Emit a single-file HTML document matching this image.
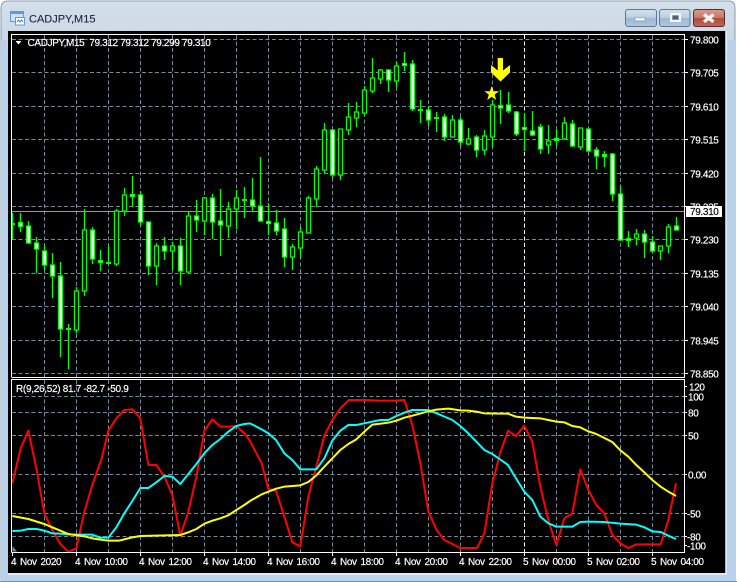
<!DOCTYPE html>
<html><head><meta charset="utf-8"><style>
html,body{margin:0;padding:0;width:737px;height:582px;overflow:hidden;background:#fff}
svg{display:block}
text{font-family:"Liberation Sans",sans-serif}
.t{font-size:10px;letter-spacing:-.35px;fill:#fff;stroke:#fff;stroke-width:.18px}
</style></head><body>
<svg width="737" height="582" viewBox="0 0 737 582" xmlns="http://www.w3.org/2000/svg">
<defs>
<linearGradient id="tb" x1="0" y1="0" x2="0" y2="1"><stop offset="0" stop-color="#d3dfe9"/><stop offset=".06" stop-color="#ccdae7"/><stop offset=".1" stop-color="#b9d1ea"/><stop offset="1" stop-color="#b9d1ea"/></linearGradient>
<linearGradient id="bb" x1="0" y1="0" x2="0" y2="1"><stop offset="0" stop-color="#d2e0ec"/><stop offset=".48" stop-color="#bccfe0"/><stop offset=".52" stop-color="#9fb9d2"/><stop offset="1" stop-color="#aec7dd"/></linearGradient>
<linearGradient id="rb" x1="0" y1="0" x2="0" y2="1"><stop offset="0" stop-color="#d89a8c"/><stop offset=".48" stop-color="#c87a6a"/><stop offset=".52" stop-color="#b04a3a"/><stop offset="1" stop-color="#c06a58"/></linearGradient>
<clipPath id="main"><rect x="12" y="35" width="672" height="342"/></clipPath>
<clipPath id="sub"><rect x="12" y="380" width="672" height="172"/></clipPath>
<clipPath id="lab"><rect x="686" y="200" width="40" height="6"/></clipPath>
</defs>
<rect width="737" height="582" fill="#fff"/>
<path d="M1 580V8Q1 1 8 1H729Q735 1 735 8V580Z" fill="url(#tb)" stroke="#8c9cab" stroke-width="1"/>
<rect x="0" y="581" width="737" height="1" fill="#2fb4c6"/>
<rect x="1" y="575" width="735" height="6" fill="#b9d1ea"/>
<rect x="1" y="40" width="6" height="536" fill="#b9d1ea"/>
<rect x="728" y="40" width="7" height="536" fill="#b9d1ea"/>

<!-- title icon -->
<rect x="10.5" y="11.5" width="13" height="10" fill="#cfe3f6" stroke="#5f9bd6"/>
<rect x="11" y="12" width="12" height="2" fill="#5f9bd6"/>
<rect x="15.5" y="17.5" width="9" height="7.5" fill="#fff" stroke="#5f9bd6"/>
<path d="M17 22l1.500-2 1.500 2 1.500-2 1.500 2" fill="none" stroke="#4a7fb8"/>
<text x="29" y="22.500" font-size="11" fill="#16243a" stroke="#16243a" stroke-width=".12">CADJPY,M15</text>

<!-- window buttons -->
<rect x="625.500" y="9.500" width="31" height="17" rx="2.500" fill="url(#bb)" stroke="#5f7890"/>
<rect x="635" y="17.500" width="10" height="3.500" fill="#f4f6f8" stroke="#6b7f94" stroke-width=".5"/>
<rect x="659.500" y="9.500" width="30.500" height="17" rx="2.500" fill="url(#bb)" stroke="#5f7890"/>
<rect x="671" y="14" width="9" height="7" fill="none" stroke="#f4f6f8" stroke-width="2"/>
<rect x="672.500" y="15.500" width="6" height="4" fill="#4f6375"/>
<rect x="693.500" y="9.500" width="31" height="17" rx="2.500" fill="url(#rb)" stroke="#5a2a24"/>
<path d="M704 14.500L713.500 21.800M713.500 14.500L704 21.800" stroke="#f4f4f4" stroke-width="3.400"/>

<!-- chart background -->
<rect x="8" y="31" width="718" height="542" fill="#000"/>
<path d="M726 31V574H8" fill="none" stroke="#eef2f5" stroke-width="1.500"/>

<!-- grid -->
<g stroke="#778899" stroke-width="1" fill="none" stroke-dasharray="4 2.500">
<path d="M12 39.500H684M12 72.500H684M12 106.500H684M12 139.500H684M12 173.500H684M12 206.500H684M12 239.500H684M12 273.500H684M12 306.500H684M12 340.500H684M12 373.500H684"/>
<path d="M44.500 35V377M76.500 35V377M108.500 35V377M140.500 35V377M172.500 35V377M204.500 35V377M236.500 35V377M268.500 35V377M300.500 35V377M332.500 35V377M364.500 35V377M396.500 35V377M428.500 35V377M460.500 35V377M492.500 35V377M556.500 35V377M588.500 35V377M620.500 35V377M652.500 35V377"/>
<path d="M12 396.500H684M12 412.500H684M12 435.500H684M12 474.500H684M12 513.500H684M12 536.500H684"/>
<path d="M44.500 380V552M76.500 380V552M108.500 380V552M140.500 380V552M172.500 380V552M204.500 380V552M236.500 380V552M268.500 380V552M300.500 380V552M332.500 380V552M364.500 380V552M396.500 380V552M428.500 380V552M460.500 380V552M492.500 380V552M556.500 380V552M588.500 380V552M620.500 380V552M652.500 380V552"/>
</g>
<path d="M524.500 35V377M524.500 380V552" stroke="#fff" stroke-dasharray="4 2.500" fill="none"/>
<path d="M12 211.500H684" stroke="#8f9aa6" stroke-width="1"/>

<!-- candles -->
<g clip-path="url(#main)">
<path fill="none" stroke="#00ff00" stroke-width="1.300" d="M12.500 213V240M20.500 213V232M28.500 221V244M36.500 237V273M44.500 245V270M52.500 253V298M60.500 262V357M68.500 324V369M76.500 287V333M84.500 209V296M92.500 227V264M100.500 250V271M108.500 245V264M116.500 209V266M124.500 188V216M132.500 176V207M140.500 191V225M148.500 222V275M156.500 243V285M164.500 237V260M172.500 242V270M180.500 238V285M188.500 212V273M196.500 200V232M204.500 197V235M212.500 194V239M220.500 189V256M228.500 202V238M236.500 190V229M244.500 187V218M252.500 178V212M260.500 157V222M268.500 203V235M276.500 210V235M284.500 218V267M292.500 244V270M300.500 227V258M308.500 196V233M316.500 166V207M324.500 123V173M332.500 129V178M340.500 129V180M348.500 103V135M356.500 102V127M364.500 86V115M372.500 58V93M380.500 69V84M388.500 69V92M396.500 62V87M404.500 52V71M412.500 60V111M420.500 100V123M428.500 106V126M436.500 112V132M444.500 114V141M452.500 115V137M460.500 117V146M468.500 128V145M476.500 135V157M484.500 130V155M492.500 100V147M500.500 90V124M508.500 92V113M516.500 111V136M524.500 113V151M532.500 111V136M540.500 124V154M548.500 125V154M556.500 129V146M564.500 117V140M572.500 120V147M580.500 128V150M588.500 128V152M596.500 147V169M604.500 151V167M612.500 153V201M620.500 185V241M628.500 231V247M636.500 229V245M644.500 230V258M652.500 236V253M660.500 246V260M668.500 224V253M676.500 217V230"/>
<path fill="none" stroke="#00ff00" stroke-width="2" d="M10 224H15M66 329H71M106 263H111M242 200H247M418 110H423M434 118H439"/>
<path fill="#fff" stroke="#00ff00" stroke-width="1.300" d="M18.500 222.500h4V226.500h-4zM26.500 226h4V243h-4zM34.500 243h4V249h-4zM42.500 251h4V265h-4zM50.500 265h4V276h-4zM58.500 276h4V329h-4zM90.500 230h4V259h-4zM98.500 260.500h4V262.500h-4zM130.500 194.500h4V196.500h-4zM138.500 195h4V222h-4zM146.500 222h4V266h-4zM162.500 246h4V251h-4zM178.500 246h4V271h-4zM194.500 216h4V220h-4zM210.500 198h4V222h-4zM218.500 221h4V225h-4zM250.500 200h4V206h-4zM258.500 206h4V221h-4zM266.500 221.500h4V223.500h-4zM274.500 223h4V231h-4zM282.500 229h4V257h-4zM330.500 130h4V175h-4zM386.500 70h4V80h-4zM402.500 63.500h4V65.500h-4zM410.500 64h4V109h-4zM426.500 110h4V120h-4zM442.500 117h4V137h-4zM458.500 120h4V142h-4zM474.500 137h4V150h-4zM498.500 105.500h4V108h-4zM506.500 105h4V111h-4zM514.500 112h4V134h-4zM522.500 127.500h4V129.500h-4zM530.500 131h4V135h-4zM538.500 127h4V149h-4zM554.500 138.500h4V140.500h-4zM570.500 124h4V146h-4zM586.500 129h4V151h-4zM594.500 150h4V156h-4zM602.500 154.500h4V156.500h-4zM610.500 154h4V194h-4zM618.500 194h4V240h-4zM626.500 238.500h4V240.500h-4zM642.500 234h4V242h-4zM650.500 242h4V251h-4zM674.500 226h4V230h-4z"/>
<path fill="#000" stroke="#00ff00" stroke-width="1.300" d="M74.500 291h4V330h-4zM82.500 230h4V291h-4zM114.500 211h4V264h-4zM122.500 195h4V211h-4zM154.500 246h4V266h-4zM170.500 246h4V251h-4zM186.500 216h4V272h-4zM202.500 198h4V221h-4zM226.500 209h4V226h-4zM234.500 198h4V209h-4zM290.500 247h4V257h-4zM298.500 232h4V248h-4zM306.500 198h4V233h-4zM314.500 169h4V199h-4zM322.500 130h4V170h-4zM338.500 129h4V175h-4zM346.500 117h4V130h-4zM354.500 112h4V118h-4zM362.500 90h4V113h-4zM370.500 78h4V91h-4zM378.500 70h4V79h-4zM394.500 66h4V81h-4zM450.500 120h4V137h-4zM466.500 139h4V144h-4zM482.500 136h4V150h-4zM490.500 105h4V137h-4zM562.500 123h4V139h-4zM578.500 128h4V147h-4zM658.500 246h4V251h-4zM666.500 227h4V246h-4zM546.500 141h4V145h-4zM634.500 234h4V238h-4z"/>
</g>

<!-- arrow and star -->
<path d="M497.700 58H503V70.500L510 65V72.500L500.500 81.500L491 72.500V65L497.700 70.500Z" fill="#ffff00"/>
<polygon points="491.700,86 493.500,91.300 499,91.300 494.600,94.600 496.200,100 491.700,96.800 487.200,100 488.800,94.600 484.400,91.300 489.900,91.300" fill="#ffff00"/>

<!-- indicators -->
<g clip-path="url(#sub)" fill="none" stroke-width="6" stroke-linejoin="round">
<g transform="translate(0 370) scale(.33333)">
<polyline stroke="#ff0000" points="37,340 62,235 85,182 110,300 133,430 157,480 181,522 205,545 229,535 253,425 277,345 305,265 325,182 349,145 373,120 397,118 421,145 445,285 469,285 493,320 517,375 541,497 565,425 589,320 613,182 637,148 661,170 685,170 709,168 733,190 750,213"/>
</g>
<g transform="translate(250 370) scale(.33333)">
<polyline stroke="#ff0000" points="0,213 35,280 55,357 78,362 103,440 127,517 151,529 175,380 199,290 223,197 247,150 271,115 297,90 343,90 391,92 439,92 463,90 487,165 511,280 535,425 560,480 583,510 607,522 631,534 681,534 703,490 727,340 750,250"/>
</g>
<g transform="translate(490 370) scale(.33333)">
<polyline stroke="#ff0000" points="30,250 54,182 78,198 103,167 127,215 151,350 175,450 199,525 223,445 247,430 271,298 295,360 319,405 343,430 367,495 391,520 415,534 439,523 512,523 535,450 558,340"/>
</g>
<g transform="translate(0 370) scale(.33333)">
<polyline stroke="#00ffff" points="37,483 62,482 85,477 110,477 133,482 157,490 181,491 205,493 229,494 277,494 301,503 325,503 349,472 373,430 397,393 421,354 445,354 469,337 493,318 517,320 541,342 565,312 589,282 613,250 637,225 661,207 685,185 709,168 733,162 750,160"/>
</g>
<g transform="translate(250 370) scale(.33333)">
<polyline stroke="#00ffff" points="0,160 35,178 55,190 78,210 103,250 127,270 151,298 199,298 223,265 247,212 271,182 295,165 319,165 343,160 367,155 391,150 415,150 439,138 463,128 487,120 535,120 560,130 607,150 631,168 655,190 679,215 703,240 727,252 750,268"/>
</g>
<g transform="translate(490 370) scale(.33333)">
<polyline stroke="#00ffff" points="30,268 54,285 78,325 103,365 127,390 151,440 175,460 199,470 247,470 271,456 295,455 343,456 391,461 439,464 463,472 487,484 512,486 535,497 558,507"/>
</g>
<g transform="translate(0 370) scale(.33333)">
<polyline stroke="#ffff00" points="37,438 85,447 133,462 157,472 181,482 205,492 253,499 277,505 301,509 325,512 357,512 397,502 421,498 541,495 565,487 589,477 613,461 637,452 661,445 685,436 709,420 733,405 750,393"/>
</g>
<g transform="translate(250 370) scale(.33333)">
<polyline stroke="#ffff00" points="0,393 35,373 55,365 78,356 103,350 151,346 175,336 199,316 223,290 247,265 271,240 295,222 319,208 343,185 367,164 415,158 439,152 463,143 487,137 535,124 559,119 595,116 631,121 655,122 679,125 703,130 750,131"/>
</g>
<g transform="translate(490 370) scale(.33333)">
<polyline stroke="#ffff00" points="30,131 54,131 78,140 103,143 151,145 175,150 199,155 223,157 247,168 271,172 295,184 319,192 343,204 367,216 391,241 415,260 439,285 463,307 487,330 512,350 535,365 558,378"/>
</g>
</g>
<polygon points="12.500,546 17,551.500 12.500,551.500" fill="#778899"/>

<!-- frames -->
<path d="M11.500 377V34.500H684.500V377.500H11.500" fill="none" stroke="#fff"/>
<path d="M11.500 552.500V379.500H684.500V552.500H11.500" fill="none" stroke="#fff"/>
<path fill="none" stroke="#fff" d="M684 39.500h4M684 72.500h4M684 106.500h4M684 139.500h4M684 173.500h4M684 206.500h4M684 239.500h4M684 273.500h4M684 306.500h4M684 340.500h4M684 373.500h4M684 386.500h3M684 396.500h3M684 412.500h3M684 435.500h3M684 474.500h3M684 513.500h3M684 536.500h3M684 545.500h3M12.500 552v4M76.500 552v4M140.500 552v4M204.500 552v4M268.500 552v4M332.500 552v4M396.500 552v4M460.500 552v4M524.500 552v4M588.500 552v4M652.500 552v4"/>

<!-- legend -->
<polygon points="15.500,41 21.500,41 18.500,44.500" fill="#fff"/>
<text class="t" x="27.500" y="46" xml:space="preserve">CADJPY,M15  79.312 79.312 79.299 79.310</text>
<text class="t" x="16" y="392" style="letter-spacing:-.3px">R(9,26,52) 81.7 -82.7 -50.9</text>

<!-- price labels -->
<g>
<text class="t" x="690" y="43.500">79.800</text>
<text class="t" x="690" y="76.500">79.705</text>
<text class="t" x="690" y="110.500">79.610</text>
<text class="t" x="690" y="143.500">79.515</text>
<text class="t" x="690" y="177.500">79.420</text>
<text class="t" x="690" y="210.500" clip-path="url(#lab)">79.325</text>
<text class="t" x="690" y="243.500">79.230</text>
<text class="t" x="690" y="277.500">79.135</text>
<text class="t" x="690" y="310.500">79.040</text>
<text class="t" x="690" y="344.500">78.945</text>
<text class="t" x="690" y="377.500">78.850</text>
<text class="t" x="689" y="390.500">120</text>
<text class="t" x="688" y="400.500">100</text>
<text class="t" x="688" y="416.500">80</text>
<text class="t" x="688" y="439.500">50</text>
<text class="t" x="688" y="478.500">0.00</text>
<text class="t" x="687" y="517.500">-50</text>
<text class="t" x="687" y="540.500">-80</text>
<text class="t" x="687" y="549.500">-100</text>
</g>
<rect x="686" y="206" width="36" height="11" fill="#fff"/>
<text x="690" y="215" font-size="10" letter-spacing="-.35" fill="#000" stroke="#000" stroke-width=".15">79.310</text>

<!-- time labels -->
<g word-spacing="1.500">
<text class="t" style="letter-spacing:-.4px" x="11" y="565">4 Nov 2020</text>
<text class="t" style="letter-spacing:-.4px" x="75" y="565">4 Nov 10:00</text>
<text class="t" style="letter-spacing:-.4px" x="139" y="565">4 Nov 12:00</text>
<text class="t" style="letter-spacing:-.4px" x="203" y="565">4 Nov 14:00</text>
<text class="t" style="letter-spacing:-.4px" x="267" y="565">4 Nov 16:00</text>
<text class="t" style="letter-spacing:-.4px" x="331" y="565">4 Nov 18:00</text>
<text class="t" style="letter-spacing:-.4px" x="395" y="565">4 Nov 20:00</text>
<text class="t" style="letter-spacing:-.4px" x="459" y="565">4 Nov 22:00</text>
<text class="t" style="letter-spacing:-.4px" x="523" y="565">5 Nov 00:00</text>
<text class="t" style="letter-spacing:-.4px" x="587" y="565">5 Nov 02:00</text>
<text class="t" style="letter-spacing:-.4px" x="651" y="565">5 Nov 04:00</text>
</g>
</svg>
</body></html>
